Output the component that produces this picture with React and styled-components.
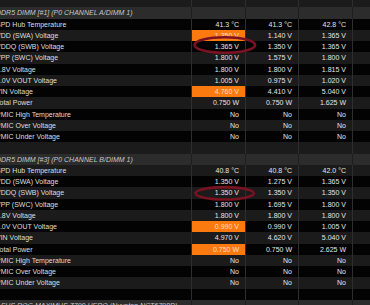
import React from "react";
import styled, { createGlobalStyle } from "styled-components";

const GlobalStyle = createGlobalStyle`
  html, body {
    margin: 0;
    padding: 0;
    background: #000;
  }
  body {
    font-family: "Liberation Sans", Arial, sans-serif;
  }
`;

const Screen = styled.div`
  position: relative;
  width: 370px;
  height: 305px;
  overflow: hidden;
  background: #000;
`;

const Table = styled.div`
  display: flex;
  flex-direction: column;
  margin: -4px 0 0 -6px;
`;

const Row = styled.div`
  display: grid;
  grid-template-columns: 197px 54px 53px 54px 1fr;
  flex: none;
  height: 11.25px;
  line-height: 11.25px;
  font-size: 7px;
  background: ${props => props.$header ? '#2c2c2c' : props.$stripe ? '#1b1b1b' : '#030303'};
`;

const Label = styled.div`
  padding-left: 2px;
  white-space: nowrap;
  color: ${props => props.$header ? '#c6c6c6' : '#dedede'};
  font-style: ${props => props.$header ? 'italic' : 'normal'};
`;

const Value = styled.div`
  border-left: 1px solid ${props => props.$header ? '#1e1e1e' : '#2e2e2e'};
  padding-right: 6px;
  text-align: right;
  white-space: nowrap;
  color: ${props => props.$hot ? '#ffdcc6' : '#e4e4e4'};
  background: ${props => props.$hot ? '#fb7a10' : 'transparent'};
`;

const Marks = styled.svg`
  position: absolute;
  top: 0;
  left: 0;
  pointer-events: none;
`;

const sections = [
  {
    title: 'DDR5 DIMM [#1] (P0 CHANNEL A/DIMM 1)',
    rows: [
      ['SPD Hub Temperature', ['41.3 °C', '41.3 °C', '42.8 °C']],
      ['VDD (SWA) Voltage', ['1.350 V', '1.140 V', '1.365 V'], 0],
      ['VDDQ (SWB) Voltage', ['1.365 V', '1.350 V', '1.365 V']],
      ['VPP (SWC) Voltage', ['1.800 V', '1.575 V', '1.800 V']],
      ['1.8V Voltage', ['1.800 V', '1.800 V', '1.815 V']],
      ['1.0V VOUT Voltage', ['1.005 V', '0.975 V', '1.020 V']],
      ['VIN Voltage', ['4.760 V', '4.410 V', '5.040 V'], 0],
      ['Total Power', ['0.750 W', '0.750 W', '1.625 W']],
      ['PMIC High Temperature', ['No', 'No', 'No']],
      ['PMIC Over Voltage', ['No', 'No', 'No']],
      ['PMIC Under Voltage', ['No', 'No', 'No']],
    ],
  },
  {
    title: 'DDR5 DIMM [#3] (P0 CHANNEL B/DIMM 1)',
    rows: [
      ['SPD Hub Temperature', ['40.8 °C', '40.8 °C', '42.0 °C']],
      ['VDD (SWA) Voltage', ['1.350 V', '1.275 V', '1.365 V']],
      ['VDDQ (SWB) Voltage', ['1.350 V', '1.350 V', '1.350 V']],
      ['VPP (SWC) Voltage', ['1.800 V', '1.695 V', '1.800 V']],
      ['1.8V Voltage', ['1.800 V', '1.800 V', '1.800 V']],
      ['1.0V VOUT Voltage', ['0.990 V', '0.990 V', '1.005 V'], 0],
      ['VIN Voltage', ['4.970 V', '4.620 V', '5.040 V']],
      ['Total Power', ['0.750 W', '0.750 W', '2.625 W'], 0],
      ['PMIC High Temperature', ['No', 'No', 'No']],
      ['PMIC Over Voltage', ['No', 'No', 'No']],
      ['PMIC Under Voltage', ['No', 'No', 'No']],
    ],
  },
];

function buildRows() {
  const list = [{ kind: 'blank', stripe: true }];
  let i = 1;
  sections.forEach(section => {
    list.push({ kind: 'header', label: section.title });
    i++;
    section.rows.forEach(([label, values, hot]) => {
      list.push({ kind: 'data', label, values, hot, stripe: i % 2 === 1 });
      i++;
    });
    list.push({ kind: 'blank', stripe: i % 2 === 1 });
    i++;
  });
  list.push({ kind: 'header', label: 'ASUS ROG MAXIMUS Z790 HERO (Nuvoton NCT6798D)' });
  return list;
}

export default function App() {
  const rows = buildRows();
  return (
    <Screen>
      <GlobalStyle />
      <Table>
        {rows.map((row, idx) => (
          <Row key={idx} $header={row.kind === 'header'} $stripe={row.stripe}>
            <Label $header={row.kind === 'header'}>{row.label || ''}</Label>
            {[0, 1, 2, 3].map(col => (
              <Value key={col} $header={row.kind === 'header'} $hot={row.hot === col}>
                {row.values ? row.values[col] : ''}
              </Value>
            ))}
          </Row>
        ))}
      </Table>
      <Marks width="370" height="305" viewBox="0 0 370 305">
        <ellipse cx="224.8" cy="45" rx="30.3" ry="7.8" fill="none" stroke="#7b1222" strokeWidth="2.6" />
        <ellipse cx="224.7" cy="193.3" rx="29.2" ry="6.2" fill="none" stroke="#7b1222" strokeWidth="2.6" />
      </Marks>
    </Screen>
  );
}
